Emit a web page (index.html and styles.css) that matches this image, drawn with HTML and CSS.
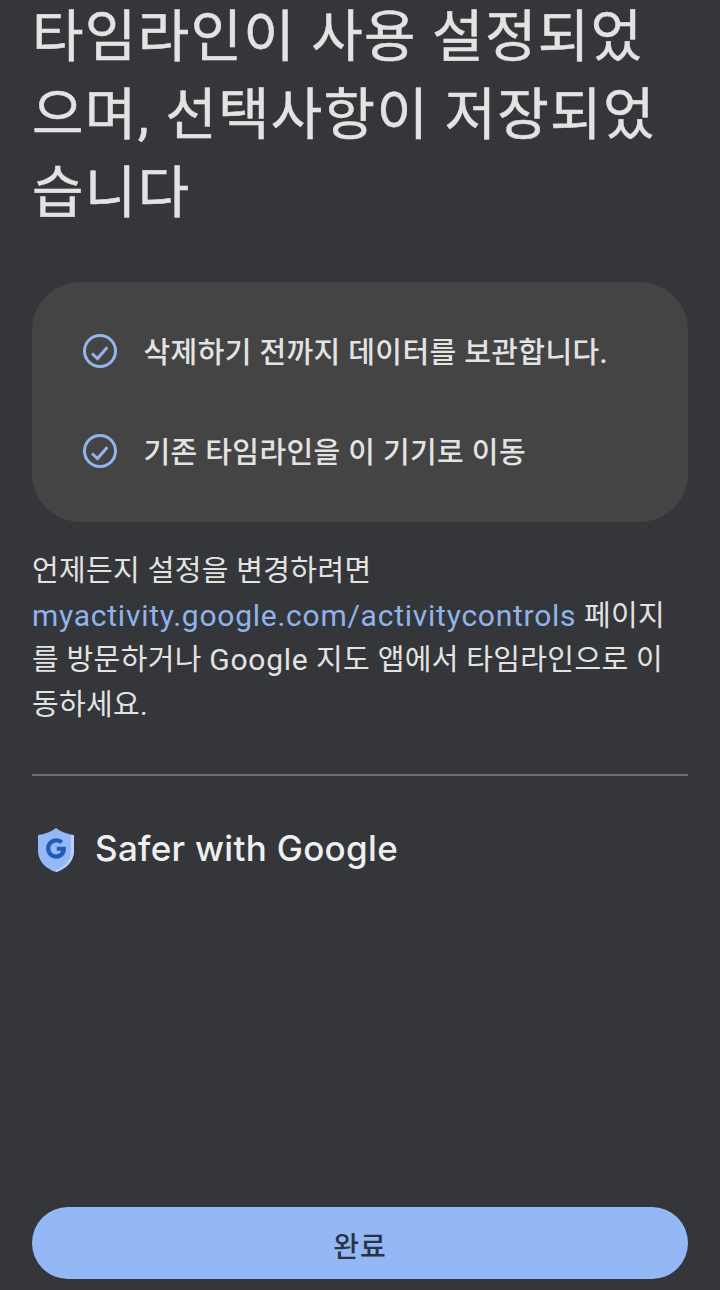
FILE: index.html
```html
<!DOCTYPE html>
<html lang="ko">
<head>
<meta charset="utf-8">
<title>타임라인</title>
<link rel="stylesheet" href="styles.css">
</head>
<body>
<main class="screen">
  <h1 class="title">타임라인이 사용 설정되었<br>으며, 선택사항이 저장되었<br>습니다</h1>
  <section class="card">
    <div class="row">
      <svg class="check" viewBox="0 0 34 34"><circle cx="17" cy="17" r="15.5"/><path d="M9 19.500l5.500 5 9.800-11.200"/></svg>
      <span class="row-text">삭제하기 전까지 데이터를 보관합니다.</span>
    </div>
    <div class="row">
      <svg class="check" viewBox="0 0 34 34"><circle cx="17" cy="17" r="15.5"/><path d="M9 19.500l5.500 5 9.800-11.200"/></svg>
      <span class="row-text">기존 타임라인을 이 기기로 이동</span>
    </div>
  </section>
  <p class="note">언제든지 설정을 변경하려면<br><a class="link latin">myactivity.google.com/activitycontrols</a> 페이지<br>를 방문하거나 <span class="latin">Google</span> 지도 앱에서 타임라인으로 이<br>동하세요.</p>
  <hr class="rule">
  <div class="safer">
    <svg class="shield" viewBox="0 0 36 44">
      <path class="shield-body" d="M18 0C23 4 30 6.500 36 7V23C36 33 28 41 18 44C8 41 0 33 0 23V7C6 6.500 13 4 18 0Z"/>
      <path class="shield-shade" d="M18 44C28 41 36 33 36 23V7L33 8V23C33 32 27 39 18 42Z"/>
      <path class="shield-g" transform="translate(18 20.500) scale(1.18) translate(-17.800 -23)" d="M26 21.500H18.500V25H22.300C21.700 27 20.100 28 18 28C15.200 28 13 25.800 13 23S15.200 18 18 18C19.300 18 20.400 18.400 21.300 19.200L23.900 16.600C22.300 15.200 20.300 14.400 18 14.400C13.200 14.400 9.400 18.200 9.400 23S13.200 31.600 18 31.600C22.800 31.600 26.200 28.200 26.200 23.200C26.200 22.600 26.100 22 26 21.500Z"/>
    </svg>
    <span class="safer-text">Safer with Google</span>
  </div>
  <button class="done">완료</button>
</main>
</body>
</html>
```
FILE: styles.css
```css
* { box-sizing: border-box; }
html, body { margin: 0; padding: 0; }
body {
  background: #35363a;
  font-family: Roboto, "Noto Sans CJK KR", sans-serif;
  color: #e3e3e3;
}
.screen {
  height: 1290px;
  overflow: hidden;
  padding: 0 32px;
  display: flex;
  flex-direction: column;
}
.title {
  margin: -2px 0 0;
  font-size: 56px;
  line-height: 78px;
  font-weight: 400;
  -webkit-text-stroke: 0.5px #e3e3e3;
  white-space: nowrap;
  letter-spacing: 1.3px;
}
.card {
  margin-top: 50px;
  height: 240px;
  background: #444444;
  border-radius: 48px;
  padding: 44px 51px;
  display: flex;
  flex-direction: column;
  gap: 50px;
}
.row {
  display: flex;
  align-items: center;
  gap: 26.500px;
  height: 50px;
  font-size: 29px;
  font-weight: 500;
  letter-spacing: 0.4px;
  white-space: nowrap;
}
.row-text { padding-bottom: 2px; }
.check { width: 34px; height: 34px; flex: none; }
.check circle, .check path {
  fill: none;
  stroke: #93b5ec;
  stroke-width: 3;
}
.note {
  margin: 27px 0 0;
  font-size: 29px;
  line-height: 44.500px;
  letter-spacing: 0.35px;
  white-space: nowrap;
}
.latin { font-size: 30px; letter-spacing: 0.75px; }
.link { color: #8fb3ea; }
.rule {
  margin: 47px 0 0;
  border: 0;
  height: 2px;
  background: #6b6c6f;
}
.safer {
  margin-top: 51px;
  display: flex;
  align-items: center;
  gap: 21px;
  padding-left: 6px;
  font-family: Inter, Roboto, sans-serif;
  font-size: 35px;
  font-weight: 500;
  letter-spacing: 0.3px;
  color: #eeeff1;
  height: 46px;
}
.safer-text { padding-bottom: 4px; }
.shield { width: 36px; height: 44px; flex: none; }
.shield-body { fill: #94b9f6; }
.shield-shade { fill: #b8d0fa; }
.shield-g { fill: #1f5cb8; }
.done {
  margin-top: auto;
  margin-bottom: 11px;
  height: 72px;
  border: 0;
  border-radius: 36px;
  padding-top: 4px;
  background: #94b8f5;
  color: #2b3245;
  font: 500 28px Roboto, "Noto Sans CJK KR", sans-serif;
  letter-spacing: 1px;
}
```
